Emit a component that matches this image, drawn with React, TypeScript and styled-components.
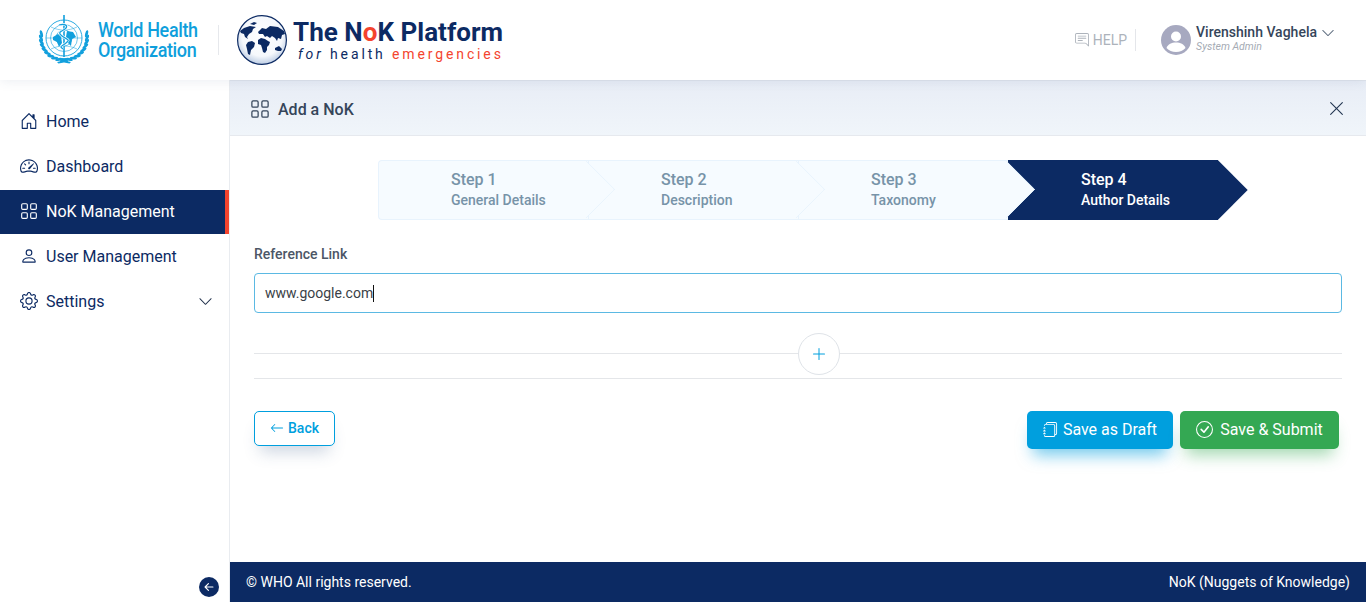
import React from 'react'
import styled, { createGlobalStyle } from 'styled-components'
import {
  BsArrowLeft,
  BsArrowLeftShort,
  BsChatRightText,
  BsCheckCircle,
  BsChevronDown,
  BsGear,
  BsGrid,
  BsHouseDoor,
  BsJournals,
  BsPerson,
  BsPlusLg,
  BsSpeedometer2,
  BsXLg,
} from 'react-icons/bs'

const NAVY = '#0c2a63'
const BLUE = '#009fde'
const RED = '#f4442e'

const GlobalStyle = createGlobalStyle`
  html, body { margin: 0; padding: 0; height: 100%; background: #fff; }
  body { font-family: Roboto, "Liberation Sans", sans-serif; overflow: hidden; }
  * { box-sizing: border-box; }
`

const Page = styled.div`
  width: 1366px;
  height: 602px;
  display: flex;
  flex-direction: column;
`

const Header = styled.header`
  height: 80px;
  flex: none;
  display: flex;
  align-items: center;
  justify-content: space-between;
  padding: 0 31px 0 38px;
  background: #fff;
  box-shadow: 0 0 12px rgba(60, 80, 120, 0.12);
  position: relative;
  z-index: 2;
`

const Brand = styled.div`
  display: flex;
  align-items: center;
`

const WhoName = styled.div`
  width: 100px;
  margin-left: 8px;
  font-size: 20px;
  line-height: 20px;
  font-weight: 500;
  color: #0f9fdc;
  letter-spacing: -0.4px;
  white-space: nowrap;
  transform: scaleX(0.9);
  transform-origin: left center;
`

const BrandDivider = styled.div`
  width: 1px;
  height: 30px;
  margin: 0 18px 0 20px;
  background: #e6e8ec;
`

const PlatformText = styled.div`
  margin-left: 6px;
  white-space: nowrap;
`

const PlatformTitle = styled.div`
  font-size: 26px;
  line-height: 28px;
  font-weight: 700;
  letter-spacing: 0.03px;
  color: ${NAVY};
`

const RedLetter = styled.span`
  color: ${RED};
`

const PlatformSub = styled.div`
  margin: 0 0 0 5px;
  font-size: 14px;
  line-height: 16px;
  letter-spacing: 2.87px;
  color: ${NAVY};
`

const ItalicWord = styled.i`
  font-style: italic;
`

const HeaderRight = styled.div`
  display: flex;
  align-items: center;
`

const Help = styled.div`
  display: flex;
  align-items: center;
  gap: 4px;
  height: 22px;
  padding-right: 8px;
  border-right: 1px solid #e4e6ea;
  font-size: 14px;
  color: #adb3bb;
  svg {
    font-size: 14px;
  }
`

const Avatar = styled.svg`
  width: 30px;
  height: 30px;
  margin: 0 5px 0 25px;
`

const UserInfo = styled.div`
  display: flex;
  flex-direction: column;
  margin-top: -3px;
`

const UserName = styled.div`
  font-size: 14px;
  line-height: 15px;
  font-weight: 500;
  color: #35455a;
`

const UserRole = styled.div`
  font-size: 10.5px;
  line-height: 13px;
  font-style: italic;
  color: #a5abb4;
`

const UserChevron = styled(BsChevronDown)`
  margin: -15px 0 0 4px;
  color: #5c6b7d;
  font-size: 14px;
`

const Body = styled.div`
  flex: 1;
  display: flex;
  min-height: 0;
`

const Sidebar = styled.aside`
  width: 230px;
  flex: none;
  display: flex;
  flex-direction: column;
  padding-top: 19px;
  border-right: 1px solid #e9ecf0;
  background: #fff;
`

const NavItem = styled.div<{ $active?: boolean }>`
  height: 44px;
  margin-top: 1px;
  display: flex;
  align-items: center;
  gap: 8px;
  padding: 0 16px 2px 20px;
  font-size: 16px;
  color: ${(p) => (p.$active ? '#fff' : NAVY)};
  background: ${(p) => (p.$active ? NAVY : 'transparent')};
  border-right: ${(p) => (p.$active ? `4px solid ${RED}` : 'none')};
  svg {
    font-size: 18px;
    flex: none;
  }
`

const NavChevron = styled(BsChevronDown)`
  margin-left: auto;
  color: #1f2f4a;
  && {
    font-size: 15px;
  }
`

const Collapse = styled.button`
  width: 20px;
  height: 20px;
  margin: auto 10px 5px auto;
  padding: 0;
  border: none;
  border-radius: 50%;
  display: flex;
  align-items: center;
  justify-content: center;
  background: ${NAVY};
  color: #fff;
  font-size: 18px;
`

const Main = styled.main`
  flex: 1;
  min-width: 0;
  display: flex;
  flex-direction: column;
`

const TitleBar = styled.div`
  height: 56px;
  flex: none;
  display: flex;
  align-items: center;
  gap: 8px;
  padding: 2px 21px 0 20px;
  border-top: 1px solid #dfe4ec;
  border-bottom: 1px solid #e6e9ee;
  background: linear-gradient(180deg, #e8edf6 0%, #f0f5fa 100%);
  color: #35455a;
  font-size: 16px;
  font-weight: 500;
  svg {
    font-size: 20px;
  }
`

const Close = styled(BsXLg)`
  margin: -2px 0 0 auto;
  color: #20334f;
  && {
    font-size: 17px;
  }
`

const Content = styled.div`
  flex: 1;
  padding: 24px 24px 0;
`

const Stepper = styled.div`
  display: flex;
  height: 60px;
  margin-left: 124px;
`

const Step = styled.div<{ $active?: boolean; $order: number }>`
  position: relative;
  z-index: ${(p) => p.$order};
  width: 210px;
  padding: ${(p) => (p.$active ? '10px 0 0 73px' : '9px 0 0 72px')};
  background: ${(p) => (p.$active ? NAVY : '#f6fbff')};
  border: ${(p) => (p.$active ? 'none' : '1px solid #e8f3fd')};
  border-right: none;
  border-radius: ${(p) => (p.$order === 4 ? '4px 0 0 4px' : '0')};
  color: ${(p) => (p.$active ? '#fff' : '#7793a8')};
  &::after {
    content: '';
    position: absolute;
    top: ${(p) => (p.$active ? 9 : 8)}px;
    right: ${(p) => (p.$active ? -21 : -19)}px;
    width: ${(p) => (p.$active ? 42 : 40)}px;
    height: ${(p) => (p.$active ? 42 : 40)}px;
    transform: rotate(45deg);
    background: ${(p) => (p.$active ? NAVY : '#f6fbff')};
    border-top: ${(p) => (p.$active ? 'none' : '1px solid #e8f3fd')};
    border-right: ${(p) => (p.$active ? 'none' : '1px solid #e8f3fd')};
    border-radius: 0 ${(p) => (p.$active ? 0 : 2)}px 0 0;
  }
`

const StepNo = styled.div`
  position: relative;
  z-index: 1;
  font-size: 16px;
  line-height: 19px;
  font-weight: 500;
`

const StepName = styled.div`
  position: relative;
  z-index: 1;
  margin-top: 3px;
  font-size: 14px;
  line-height: 17px;
  font-weight: 500;
`

const FieldLabel = styled.div`
  margin-top: 26px;
  font-size: 14px;
  line-height: 16px;
  font-weight: 500;
  color: #4c5666;
`

const Field = styled.div`
  height: 40px;
  margin-top: 11px;
  padding: 0 10px;
  display: flex;
  align-items: center;
  border: 1px solid #5bb9e3;
  border-radius: 4px;
  font-size: 14px;
  color: #3a3f47;
`

const Caret = styled.span`
  width: 1px;
  height: 17px;
  background: #111;
`

const AddRow = styled.div`
  position: relative;
  height: 42px;
  margin-top: 20px;
  display: flex;
  align-items: center;
  justify-content: center;
  &::before {
    content: '';
    position: absolute;
    left: 0;
    right: 0;
    top: 20px;
    border-top: 1px solid #e4e6e9;
  }
`

const AddButton = styled.button`
  position: relative;
  width: 42px;
  height: 42px;
  margin-left: 42px;
  padding: 0;
  display: flex;
  align-items: center;
  justify-content: center;
  border: 1px solid #dfe3e8;
  border-radius: 50%;
  background: #fff;
  color: ${BLUE};
  font-size: 16px;
`

const Rule = styled.hr`
  margin: 3px 0 0;
  border: none;
  border-top: 1px solid #e4e6e9;
`

const Actions = styled.div`
  display: flex;
  align-items: flex-start;
  margin-top: 32px;
  padding-right: 3px;
`

const BackButton = styled.button`
  width: 81px;
  height: 35px;
  padding: 0 0 2px;
  display: flex;
  align-items: center;
  justify-content: center;
  gap: 4px;
  border: 1px solid ${BLUE};
  border-radius: 5px;
  background: #fff;
  box-shadow: 0 12px 16px -6px rgba(60, 90, 140, 0.25);
  color: ${BLUE};
  font: 500 14px Roboto, sans-serif;
`

const SaveButton = styled.button<{ $tone: string; $glow: string; $width: number; $gap: number; $icon: number }>`
  width: ${(p) => p.$width}px;
  height: 38px;
  margin-left: 7px;
  padding: 0 0 2px;
  display: flex;
  align-items: center;
  justify-content: center;
  gap: ${(p) => p.$gap}px;
  border: none;
  border-radius: 5px;
  background: ${(p) => p.$tone};
  box-shadow: 0 12px 16px -6px ${(p) => p.$glow};
  color: #fff;
  font: 400 16px Roboto, sans-serif;
  svg {
    font-size: ${(p) => p.$icon}px;
  }
`

const Spacer = styled.div`
  flex: 1;
`

const Footer = styled.footer`
  height: 40px;
  flex: none;
  display: flex;
  align-items: center;
  justify-content: space-between;
  padding: 0 16px;
  background: ${NAVY};
  color: #fff;
  font-size: 14px;
`

const WhoEmblem = () => {
  const leaves = Array.from({ length: 10 }, (_, i) => i)
  return (
    <svg width="52" height="50" viewBox="0 0 52 50" fill="none">
      <g stroke="#12a0dd">
        <circle cx="26" cy="23" r="18" strokeWidth="0.9" />
        <circle cx="26" cy="23" r="13.500" strokeWidth="0.6" />
        <circle cx="26" cy="23" r="8" strokeWidth="0.6" />
        <path d="M8 23h36M13 12c8 4 18 4 26 0M13 34c8-4 18-4 26 0" strokeWidth="0.5" />
      </g>
      <g fill="#12a0dd">
        <path d="M15 22l5-3 3 2 1 7-3 4-2-5-4-2zM29 16l6 1 3 5-4 2-1 7-3-3-2-6z" />
        {leaves.map((i) => {
          const deg = 92 + i * 11
          const a = deg * (Math.PI / 180)
          const x = 26 + Math.cos(a) * 23
          const y = 23 + Math.sin(a) * 22
          return (
            <g key={i}>
              <ellipse cx={x} cy={y} rx="1.4" ry="3.600" transform={`rotate(${deg - 205} ${x} ${y})`} />
              <ellipse cx={52 - x} cy={y} rx="1.4" ry="3.600" transform={`rotate(${205 - deg} ${52 - x} ${y})`} />
            </g>
          )
        })}
        <path d="M19 47l7-1.500 7 1.500-1.500 1.500-5.500-1-5.500 1z" />
        <rect x="25.2" y="0" width="1.6" height="42" />
      </g>
      <path d="M21 10c6-2 10 1 6 4s-8 3-3 7 9 3 4 7-7 3-3 6" stroke="#fff" strokeWidth="2.6" />
      <path d="M21 10c6-2 10 1 6 4s-8 3-3 7 9 3 4 7-7 3-3 6" stroke="#12a0dd" strokeWidth="1.3" />
    </svg>
  )
}

const PlatformGlobe = () => (
  <svg width="50" height="50" viewBox="0 0 50 50">
    <defs>
      <radialGradient id="sea" cx="50%" cy="42%" r="55%">
        <stop offset="0%" stopColor="#ffffff" />
        <stop offset="75%" stopColor="#f5f8fc" />
        <stop offset="100%" stopColor="#c6d4e8" />
      </radialGradient>
    </defs>
    <circle cx="25" cy="25" r="24.4" fill="url(#sea)" stroke={NAVY} strokeWidth="1.2" />
    <g fill={NAVY}>
      <path d="M3 16l4-3 6-2 6 1-3 2-1 3-3 2-2 3 1 2-3-2-1-3-3-1z" />
      <path d="M13 9l4-2 3 1-3 2z" />
      <path d="M11 27l4-1 3 2-1 4-3 3-1 5-2-1-1-5-1-4z" />
      <path d="M22 16l3-3 4 1 4-3 8 1 6 4 1 3-3 1-1 4-3-1-1 3-2-3-3-2-2 2-3-2-2 1-2-3-4 0-1-2z" />
      <path d="M21 25l3-2 4 1 3 2 2 1-1 3-2 2 0 3-2 3-2-1-1-4-1-3-3-1z" />
      <path d="M38 33l4-2 3 3-1 2-3 0-3-1z" />
    </g>
  </svg>
)

const steps = [
  { no: 'Step 1', name: 'General Details' },
  { no: 'Step 2', name: 'Description' },
  { no: 'Step 3', name: 'Taxonomy' },
  { no: 'Step 4', name: 'Author Details' },
]

export default function App() {
  return (
    <Page>
      <GlobalStyle />
      <Header>
        <Brand>
          <WhoEmblem />
          <WhoName>
            World Health
            <br />
            Organization
          </WhoName>
          <BrandDivider />
          <PlatformGlobe />
          <PlatformText>
            <PlatformTitle>
              The N<RedLetter>o</RedLetter>K Platform
            </PlatformTitle>
            <PlatformSub>
              <ItalicWord>for</ItalicWord> health <RedLetter>emergencies</RedLetter>
            </PlatformSub>
          </PlatformText>
        </Brand>
        <HeaderRight>
          <Help>
            <BsChatRightText />
            HELP
          </Help>
          <Avatar viewBox="0 0 30 30">
            <circle cx="15" cy="15" r="15" fill="#a7a9c0" />
            <circle cx="15" cy="11.5" r="5" fill="#fff" />
            <path d="M5.5 23c1.500-4 5-5.500 9.500-5.500s8 1.500 9.500 5.500c-2.500 2.500-5.500 4-9.500 4s-7-1.500-9.500-4z" fill="#fff" />
          </Avatar>
          <UserInfo>
            <UserName>Virenshinh Vaghela</UserName>
            <UserRole>System Admin</UserRole>
          </UserInfo>
          <UserChevron />
        </HeaderRight>
      </Header>
      <Body>
        <Sidebar>
          <NavItem>
            <BsHouseDoor />
            Home
          </NavItem>
          <NavItem>
            <BsSpeedometer2 />
            Dashboard
          </NavItem>
          <NavItem $active>
            <BsGrid />
            NoK Management
          </NavItem>
          <NavItem>
            <BsPerson />
            User Management
          </NavItem>
          <NavItem>
            <BsGear />
            Settings
            <NavChevron />
          </NavItem>
          <Collapse>
            <BsArrowLeftShort />
          </Collapse>
        </Sidebar>
        <Main>
          <TitleBar>
            <BsGrid />
            Add a NoK
            <Close />
          </TitleBar>
          <Content>
            <Stepper>
              {steps.map((s, i) => (
                <Step key={s.no} $order={4 - i} $active={i === 3}>
                  <StepNo>{s.no}</StepNo>
                  <StepName>{s.name}</StepName>
                </Step>
              ))}
            </Stepper>
            <FieldLabel>Reference Link</FieldLabel>
            <Field>
              www.google.com
              <Caret />
            </Field>
            <AddRow>
              <AddButton>
                <BsPlusLg />
              </AddButton>
            </AddRow>
            <Rule />
            <Actions>
              <BackButton>
                <BsArrowLeft />
                Back
              </BackButton>
              <Spacer />
              <SaveButton $tone="#009fde" $glow="rgba(0, 159, 222, 0.55)" $width={146} $gap={5} $icon={15}>
                <BsJournals />
                Save as Draft
              </SaveButton>
              <SaveButton $tone="#34a853" $glow="rgba(52, 168, 83, 0.45)" $width={159} $gap={7} $icon={17}>
                <BsCheckCircle />
                Save &amp; Submit
              </SaveButton>
            </Actions>
          </Content>
          <Footer>
            <span>© WHO All rights reserved.</span>
            <span>NoK (Nuggets of Knowledge)</span>
          </Footer>
        </Main>
      </Body>
    </Page>
  )
}
